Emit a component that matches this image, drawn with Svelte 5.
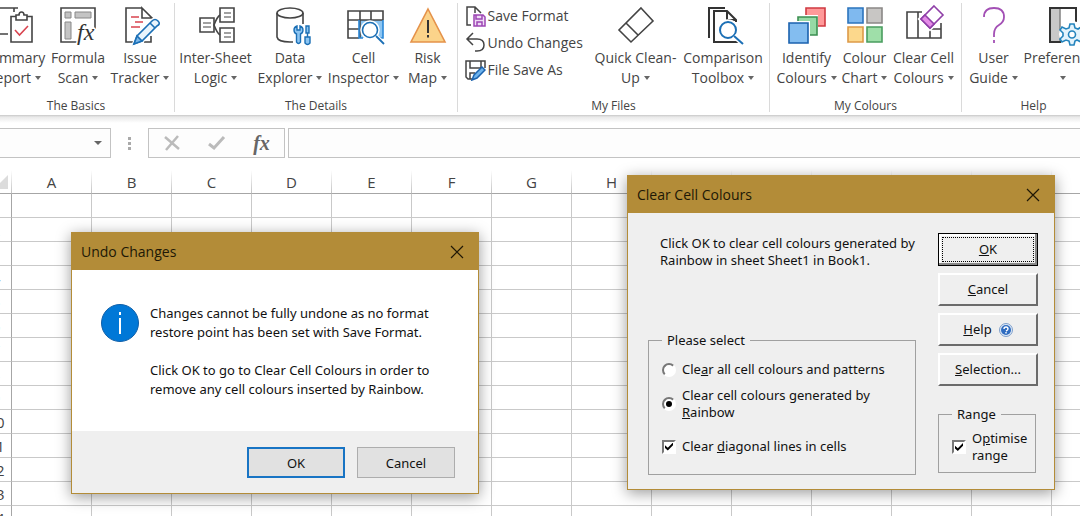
<script lang="ts">
	type Tool = { id: string; lines: [string, string] };
	type Group = { id: string; label: string; small?: { id: string; text: string }[]; tools: Tool[] };

	const groups: Group[] = [
		{
			id: 'basics',
			label: 'The Basics',
			tools: [
				{ id: 'summary', lines: ['Summary', 'Report'] },
				{ id: 'formula', lines: ['Formula', 'Scan'] },
				{ id: 'issue', lines: ['Issue', 'Tracker'] }
			]
		},
		{
			id: 'details',
			label: 'The Details',
			tools: [
				{ id: 'logic', lines: ['Inter-Sheet', 'Logic'] },
				{ id: 'data', lines: ['Data', 'Explorer'] },
				{ id: 'cell', lines: ['Cell', 'Inspector'] },
				{ id: 'risk', lines: ['Risk', 'Map'] }
			]
		},
		{
			id: 'files',
			label: 'My Files',
			small: [
				{ id: 'save', text: 'Save Format' },
				{ id: 'undo', text: 'Undo Changes' },
				{ id: 'saveas', text: 'File Save As' }
			],
			tools: [
				{ id: 'clean', lines: ['Quick Clean-', 'Up'] },
				{ id: 'compare', lines: ['Comparison', 'Toolbox'] }
			]
		},
		{
			id: 'colours',
			label: 'My Colours',
			tools: [
				{ id: 'identify', lines: ['Identify', 'Colours'] },
				{ id: 'chart', lines: ['Colour', 'Chart'] },
				{ id: 'clear', lines: ['Clear Cell', 'Colours'] }
			]
		},
		{
			id: 'help',
			label: 'Help',
			tools: [
				{ id: 'guide', lines: ['User', 'Guide'] },
				{ id: 'prefs', lines: ['Preferences', ''] }
			]
		}
	];

	const columns = 'ABCDEFGHIJKLMN'.split('');
	const rows = Array.from({ length: 14 }, (_, i) => i + 1);

	let undoOpen = $state(true);
	let clearOpen = $state(true);
	let mode = $state('rainbow');
	let diagonals = $state(true);
	let optimise = $state(true);
	let cellName = $state('');
	let formula = $state('');
</script>

{#snippet icon(id: string)}
	<svg class="icon" viewBox="0 0 40 40" fill="none" stroke="#444" stroke-width="1.6" aria-hidden="true">
		{#if id === 'summary'}
			<path d="M14 29H3V3H24M20 7V3" />
			<path d="M17 11.5H38V37H17Z" fill="#fff" />
			<path d="M22 15V10H25Q25 7 27.500 7T30 10H33V15Z" fill="#fff" />
			<path d="M21 25L25.500 30L34 21" stroke="#d9444f" />
		{:else if id === 'formula'}
			<path d="M19 37H3V3H37V24" />
			<g fill="#c4c4c4" stroke="#888" stroke-width="1">
				<path d="M7 7H13V13H7ZM17 7H33V13H17ZM7 17H13V34H7Z" />
			</g>
			<text x="19" y="35" class="fx-glyph">fx</text>
		{:else if id === 'issue'}
			<path d="M22 3H6V37H15M31 31V37H24" />
			<path d="M22 3L32 13H22Z" />
			<path d="M11 12H19M15 17H23M11 22H20" stroke="#d9444f" />
			<path d="M14 39L17 31L32 16Q35 13 38 16T37 21L22 36Z" fill="#fff" stroke="#fff" stroke-width="4" />
			<path d="M14 39L17 31L32 16Q35 13 38 16T37 21L22 36Z" fill="#e9f4fc" stroke="#1b6fb5" />
			<path d="M14 39L17 31L22 36Z" fill="#7cb8ea" stroke="#1b6fb5" />
			<path d="M30 18L35 23" stroke="#1b6fb5" />
		{:else if id === 'logic'}
			<path d="M4 13H18V27H4ZM24 3H38V17H24ZM24 23H38V37H24Z" />
			<path d="M7 18H15M7 22H15M28 8H35M28 12H35M28 28H35M28 32H35" stroke-width="1.200" />
			<path d="M24 10Q21 12 18 20Q21 28 24 30" />
		{:else if id === 'data'}
			<ellipse cx="20" cy="8" rx="13" ry="5" />
			<path d="M7 8V32Q8 37 20 37H23M33 8V19" />
			<path
				d="M27 21Q24 22 24 25T26.500 29V37Q28.500 40 30.500 37V29Q33 28 33 25T30 21V25H27Z"
				fill="#8cc5f2"
				stroke="#1b6fb5"
				stroke-width="1.400"
			/>
			<path
				d="M36 21H39V28H36ZM37.500 28V32M35 32H40V38Q37.500 41 35 38Z"
				fill="#8cc5f2"
				stroke="#1b6fb5"
				stroke-width="1.400"
			/>
		{:else if id === 'cell'}
			<path d="M15 15H39V33H15Z" fill="#8cc5f2" stroke="none" />
			<path d="M15 33H4V6H39V15M4 15H39M4 24H16M16 6V33M27 6V15" />
			<path d="M39 15V33H34M19 33H15V15" stroke="#2b88d8" />
			<circle cx="26" cy="25" r="9" fill="#fff" stroke="#fff" />
			<circle cx="26" cy="25" r="7.5" fill="#fff" stroke="#1b6fb5" />
			<path d="M32 31L40 39" stroke="#fff" stroke-width="4" />
			<path d="M32 31L40 39" stroke="#1b6fb5" stroke-width="1.800" />
		{:else if id === 'risk'}
			<path d="M20 4L37 37H3Z" fill="#fbd38a" stroke="#e5924a" />
			<path d="M20 15V28M20 30V32.500" stroke="#333" stroke-width="2" />
		{:else if id === 'clean'}
			<path d="M25 3L37 16L15 37L3 25ZM10 18L22 30" />
		{:else if id === 'compare'}
			<g stroke="#333" stroke-width="2">
				<path d="M6 33V3H22" />
				<path d="M33 17V15L24 6H11V37H35V35" />
				<path d="M24 6V15H33" />
			</g>
			<circle cx="25" cy="25" r="10" fill="#fff" stroke="#fff" />
			<circle cx="25" cy="25" r="8" stroke="#1b6fb5" stroke-width="2" />
			<path d="M31 31L40 39" stroke="#fff" stroke-width="5" />
			<path d="M31 31L40 39" stroke="#1b6fb5" stroke-width="2" />
		{:else if id === 'identify'}
			<path d="M19 3H38V21H19Z" fill="#f99" stroke="#cf3a42" />
			<path d="M9 10H31V31H9Z" fill="#fff" stroke="none" />
			<path d="M11 12H30V30H11Z" fill="#97d9a5" stroke="#3c8f52" />
			<path d="M0 16H23V39H0Z" fill="#fff" stroke="none" />
			<path d="M2 18H21V38H2Z" fill="#83bdf0" stroke="#1b62ae" />
		{:else if id === 'chart'}
			<path d="M3 3H18V18H3Z" fill="#7fb9ef" stroke="#2b74bd" />
			<path d="M22 3H37V18H22Z" fill="#c8c6c4" stroke="#8a8886" />
			<path d="M3 22H18V37H3Z" fill="#fcd88c" stroke="#dd9a48" />
			<path d="M22 22H37V37H22Z" fill="#9fdfa9" stroke="#4a9d5f" />
		{:else if id === 'clear'}
			<path d="M18 7H3V33H37V18M14 7V33M26 33V24H37" />
			<path d="M30 1L39 10L26 23L17 14Z" fill="#fff" stroke="#fff" stroke-width="5" />
			<path d="M30 1L39 10L26 23L17 14Z" fill="#fff" stroke="#8f3fa8" />
			<path d="M21 10L30 19L26 23L17 14Z" fill="#e58be8" stroke="#8f3fa8" />
		{:else if id === 'guide'}
			<path d="M10 12Q10 3 20 3T30 12Q30 17 25 20T20 29V32M20 35V38" stroke="#a350b5" stroke-width="1.800" />
		{:else if id === 'prefs'}
			<path d="M7 3H17V37H7Z" fill="#c8c8c8" stroke="none" />
			<path d="M17 3V37" stroke="#888" />
			<path d="M18 37H7V3H33V17" stroke="#333" stroke-width="2" />
			<circle cx="29" cy="29" r="13" fill="#fff" stroke="none" />
			<path
				d="M27 19H31L32 23L35 24L38 22L40 25L38 28V31L40 34L38 37L34 35L32 36L31 40H27L26 36L23 35L19 37L17 34L20 31V28L17 25L19 22L23 24L26 23Z"
				fill="#e3f3fc"
				stroke="#2484bd"
			/>
			<circle cx="29" cy="29.500" r="3.500" fill="#fff" stroke="#2484bd" />
		{/if}
	</svg>
{/snippet}

{#snippet smallIcon(id: string)}
	<svg class="small-icon" viewBox="0 0 22 22" fill="none" stroke="#444" stroke-width="1.5" aria-hidden="true">
		{#if id === 'save'}
			<path d="M7 20H3V2H11L17 8M11 2V8" />
			<path d="M10 10H19L21 12V21H10Z" fill="#efdcf5" stroke="#9d46b4" />
			<path d="M12 10V14H18V10M13 21V17H18V21" stroke="#9d46b4" />
		{:else if id === 'undo'}
			<path d="M9 1L3 7L9 13M3 7H13Q20 7 20 13T13 19H11" />
		{:else}
			<path d="M8 20H4L2 18V2H21V9M6 2V9H17V2M6 20V14H11" />
			<path d="M8 21L10 16L18 8L21 11L13 19Z" fill="#6eb3ec" stroke="#1b62ae" />
		{/if}
	</svg>
{/snippet}

{#snippet cross()}
	<svg class="cross" viewBox="0 0 14 14" stroke="#201806" stroke-width="1.2" aria-hidden="true">
		<path d="M1 1L13 13M13 1L1 13" />
	</svg>
{/snippet}

<div class="workspace">
	<div class="ribbon">
		{#each groups as group (group.id)}
			<section class="group {group.id}" aria-label={group.label}>
				<div class="tools">
					{#if group.small}
						<div class="small-tools">
							{#each group.small as item (item.id)}
								<button type="button" class="small-tool" onclick={() => item.id === 'undo' && (undoOpen = true)}>
									{@render smallIcon(item.id)}{item.text}
								</button>
							{/each}
						</div>
					{/if}
					{#each group.tools as tool (tool.id)}
						<button type="button" class="tool" onclick={() => tool.id === 'clear' && (clearOpen = true)}>
							{@render icon(tool.id)}
							<span>{tool.lines[0]}</span>
							<span class="menu">{tool.lines[1]}<i class="arrow"></i></span>
						</button>
					{/each}
				</div>
				<div class="group-label">{group.label}</div>
			</section>
		{/each}
	</div>

	<div class="formula-bar">
		<div class="name-box">
			<input type="text" aria-label="Name box" bind:value={cellName} />
			<i class="arrow"></i>
		</div>
		<div class="dots"><i></i><i></i><i></i></div>
		<div class="entry-buttons">
			<button type="button" aria-label="Cancel entry">
				<svg width="18" height="18" viewBox="0 0 18 18" stroke="#bbb" stroke-width="2.5"><path d="M2 3L16 15M15 2L3 16" /></svg>
			</button>
			<button type="button" aria-label="Enter">
				<svg width="18" height="18" viewBox="0 0 18 18" fill="none" stroke="#bbb" stroke-width="3"><path d="M1 10L6 14L16 3" /></svg>
			</button>
			<button type="button" class="fx">fx</button>
		</div>
		<input type="text" class="formula" aria-label="Formula" bind:value={formula} />
	</div>

	<table class="sheet">
		<thead>
			<tr>
				<th class="corner"><svg width="14" height="14" viewBox="0 0 14 14"><path d="M14 0V14H0Z" fill="#dcdcdc" /></svg></th>
				{#each columns as column (column)}
					<th>{column}</th>
				{/each}
			</tr>
		</thead>
		<tbody>
			{#each rows as row (row)}
				<tr>
					<th>{row}</th>
					{#each columns as column (column)}
						<td></td>
					{/each}
				</tr>
			{/each}
		</tbody>
	</table>

	{#if undoOpen}
		<div class="dialog undo-dialog" role="dialog" aria-labelledby="undo-title">
			<header>
				<h2 id="undo-title">Undo Changes</h2>
				<button type="button" aria-label="Close" onclick={() => (undoOpen = false)}>{@render cross()}</button>
			</header>
			<div class="message">
				<svg width="38" height="38" viewBox="0 0 38 38" aria-hidden="true">
					<circle cx="19" cy="19" r="18.5" fill="#0078d7" stroke="#0f5fa8" />
					<path d="M19 14V30M19 8V11" stroke="#fff" stroke-width="2" />
				</svg>
				<div>
					<p>Changes cannot be fully undone as no format<br />restore point has been set with Save Format.</p>
					<p>Click OK to go to Clear Cell Colours in order to<br />remove any cell colours inserted by Rainbow.</p>
				</div>
			</div>
			<footer>
				<button type="button" class="default" onclick={() => (undoOpen = false)}>OK</button>
				<button type="button" onclick={() => (undoOpen = false)}>Cancel</button>
			</footer>
		</div>
	{/if}

	{#if clearOpen}
		<div class="dialog clear-dialog" role="dialog" aria-labelledby="clear-title">
			<header>
				<h2 id="clear-title">Clear Cell Colours</h2>
				<button type="button" aria-label="Close" onclick={() => (clearOpen = false)}>{@render cross()}</button>
			</header>
			<div class="form">
				<div class="options">
					<p>Click OK to clear cell colours generated by<br />Rainbow in sheet Sheet1 in Book1.</p>
					<fieldset class="select-set">
						<legend>Please select</legend>
						<label>
							<input type="radio" name="mode" value="all" bind:group={mode} />
							<span>Cle<u>a</u>r all cell colours and patterns</span>
						</label>
						<label>
							<input type="radio" name="mode" value="rainbow" bind:group={mode} />
							<span>Clear cell colours generated by<br /><u>R</u>ainbow</span>
						</label>
						<label class="diagonal">
							<input type="checkbox" bind:checked={diagonals} />
							<span>Clear <u>d</u>iagonal lines in cells</span>
						</label>
					</fieldset>
				</div>
				<div class="actions">
					<button type="button" class="default" onclick={() => (clearOpen = false)}><span><u>O</u>K</span></button>
					<button type="button" onclick={() => (clearOpen = false)}><span><u>C</u>ancel</span></button>
					<button type="button">
						<span><u>H</u>elp</span>
						<svg width="14" height="14" viewBox="0 0 14 14" aria-hidden="true">
							<circle cx="7" cy="7" r="6.5" fill="#dfeaf7" stroke="#7f9fcb" />
							<circle cx="7" cy="7" r="5" fill="#2f6cc0" />
							<path d="M5 6Q5 4 7 4T9 6Q9 7 7 8M7 9V10.500" fill="none" stroke="#fff" stroke-width="1.400" />
						</svg>
					</button>
					<button type="button"><span><u>S</u>election...</span></button>
					<fieldset class="range-set">
						<legend>Range</legend>
						<label>
							<input type="checkbox" bind:checked={optimise} />
							<span>O<u>p</u>timise<br />range</span>
						</label>
					</fieldset>
				</div>
			</div>
		</div>
	{/if}
</div>

<style>
	:global(body) {
		margin: 0;
	}

	.workspace {
		position: relative;
		height: 100vh;
		overflow: hidden;
		background: #fff;
		color: #444;
		font-family: 'Open Sans', 'Noto Sans', sans-serif;
		font-size: 14px;
	}

	button,
	input {
		font: inherit;
		color: inherit;
		margin: 0;
	}

	button {
		padding: 0;
		border: none;
		background: none;
		white-space: nowrap;
	}

	/* Ribbon, scrolled a little to the right */
	.ribbon {
		display: flex;
		width: max-content;
		margin-left: -22px;
		padding-top: 3px;
	}

	.group {
		box-sizing: border-box;
		border-right: 1px solid #dadada;
		height: 109px;
		margin-bottom: 3px;
	}

	.group:last-child {
		border-right: none;
	}

	.tools {
		display: grid;
		height: 94px;
		justify-content: center;
	}

	.basics {
		width: 197px;
	}

	.basics .tools {
		grid-template-columns: 68px 60px 64px;
	}

	.details {
		width: 283px;
	}

	.details .tools {
		grid-template-columns: 76px 73px 74px 54px;
	}

	.files {
		width: 312px;
	}

	.files .tools {
		grid-template-columns: 131px 88px 87px;
	}

	.colours {
		width: 192px;
	}

	.colours .tools {
		grid-template-columns: 64px 52px 66px;
	}

	.help {
		width: 143px;
	}

	.help .tools {
		grid-template-columns: 58px 80px;
	}

	.tool {
		display: flex;
		flex-direction: column;
		align-items: center;
		line-height: 20px;
	}

	.icon {
		width: 40px;
		height: 40px;
		margin: 2px 0 3px;
		overflow: visible;
		flex: none;
	}

	.fx-glyph {
		font: italic 24px 'Liberation Serif', serif;
		fill: #333;
		stroke: #fff;
		stroke-width: 3;
		paint-order: stroke;
	}

	.menu {
		display: flex;
		align-items: center;
		gap: 4px;
		height: 20px;
	}

	.arrow {
		border: 3px solid transparent;
		border-top: 4px solid #666;
		border-bottom: none;
	}

	.small-tools {
		margin-top: -1px;
	}

	.small-tool {
		display: flex;
		align-items: center;
		height: 27px;
		gap: 2px;
		margin-left: 3px;
	}

	.small-icon {
		width: 22px;
		height: 22px;
	}

	.group-label {
		font-size: 12px;
		line-height: 18px;
		text-align: center;
	}

	/* Formula bar */
	.formula-bar {
		display: flex;
		height: 30px;
		padding: 13px 0 11px;
		background: linear-gradient(#c8c8c8, #e9e9e9 2px, #fff 8px);
	}

	.name-box,
	.entry-buttons,
	.formula {
		box-sizing: border-box;
		border: 1px solid #c3c3c3;
		background: #fdfdfd;
	}

	.name-box {
		display: flex;
		align-items: center;
		width: 111px;
		border-left: none;
		padding-right: 8px;
	}

	.name-box input {
		flex: 1;
		min-width: 0;
		border: none;
		background: none;
	}

	.name-box .arrow {
		border-width: 4px 4px 0;
	}

	.dots {
		display: flex;
		flex-direction: column;
		justify-content: center;
		align-items: center;
		gap: 2px;
		width: 37px;
	}

	.dots i {
		width: 3px;
		height: 3px;
		background: #aaa;
	}

	.entry-buttons {
		display: grid;
		grid-template-columns: repeat(3, 1fr);
		width: 137px;
		margin-right: 3px;
	}

	.entry-buttons button {
		display: flex;
		align-items: center;
		justify-content: center;
	}

	.entry-buttons .fx {
		font: italic bold 20px/20px 'Liberation Serif', serif;
		color: #666;
	}

	.formula {
		flex: 1;
		border-right: none;
	}

	/* Worksheet grid */
	.sheet {
		table-layout: fixed;
		width: 1151px;
		margin-left: -19px;
		margin-top: 1px;
		border-collapse: separate;
		border-spacing: 0;
	}

	.sheet th,
	.sheet td {
		box-sizing: border-box;
		width: 80px;
		height: 24px;
		padding: 0;
		border-right: 1px solid #c9c9c9;
		border-bottom: 1px solid #c9c9c9;
		font-size: 15px;
		line-height: 20px;
		font-weight: normal;
	}

	/* column rules fade out towards the top of the header */
	.sheet thead th {
		border-right-color: transparent;
		border-bottom-color: #a6a6a6;
		background: linear-gradient(#fff, #c0c0c0) right / 1px 100% no-repeat border-box;
	}

	.sheet th:first-child {
		width: 31px;
	}

	.sheet tbody th {
		border-right-color: #a6a6a6;
	}

	.sheet .corner {
		padding-right: 3px;
	}

	.corner svg {
		display: block;
		margin-left: auto;
	}

	/* Dialog windows */
	.dialog {
		position: absolute;
		box-sizing: border-box;
		border: 1px solid #b38c38;
		box-shadow: 0 3px 14px rgba(0, 0, 0, 0.4);
		color: #111;
		font-family: 'Noto Sans', 'Open Sans', sans-serif;
		font-size: 13px;
	}

	.dialog header {
		display: flex;
		align-items: center;
		justify-content: space-between;
		height: 37px;
		padding: 0 14px 0 9px;
		background: #b38c38;
		color: #201806;
	}

	h2 {
		margin: 0;
		font-family: 'Open Sans', 'Noto Sans', sans-serif;
		font-size: 14px;
		font-weight: normal;
	}

	.cross {
		display: block;
		width: 14px;
		height: 14px;
	}

	.undo-dialog {
		left: 71px;
		top: 232px;
		width: 408px;
		background: #fff;
	}

	.message {
		display: flex;
		gap: 11px;
		padding: 34px 29px 32px;
		line-height: 19px;
		white-space: nowrap;
	}

	.message p {
		margin: 0 0 19px;
	}

	.message p:last-child {
		margin: 0;
	}

	footer {
		display: flex;
		justify-content: flex-end;
		gap: 12px;
		padding: 16px 23px 15px;
		background: #efefef;
	}

	footer button {
		width: 98px;
		height: 31px;
		border: 1px solid #adadad;
		background: #e1e1e1;
	}

	footer .default {
		border: 2px solid #1874c4;
	}

	.clear-dialog {
		left: 627px;
		top: 175px;
		width: 428px;
		background: #efefef;
		line-height: 17px;
	}

	.form {
		display: flex;
		justify-content: space-between;
		padding: 20px 16px 14px 20px;
	}

	.options {
		display: flex;
		flex-direction: column;
		justify-content: space-between;
		width: 268px;
	}

	.options p {
		margin: 2px 0 0 12px;
		white-space: nowrap;
	}

	fieldset {
		box-sizing: border-box;
		margin: 0;
		border: 1px solid #a0a0a0;
	}

	legend {
		padding: 0 5px;
	}

	.select-set {
		height: 143px;
		padding: 12px 0 0 13px;
	}

	.clear-dialog label {
		display: flex;
		align-items: center;
		gap: 6px;
		margin-bottom: 9px;
		white-space: nowrap;
	}

	.clear-dialog .diagonal {
		margin-top: 17px;
	}

	.clear-dialog input {
		appearance: none;
		box-sizing: border-box;
		flex: none;
		display: grid;
		place-items: center;
		width: 14px;
		height: 14px;
		border: 2px solid;
		border-color: #777 #fff #fff #777;
		background: #fff;
	}

	.clear-dialog input[type='radio'] {
		border-radius: 50%;
	}

	.clear-dialog input:checked::after {
		content: '';
		width: 8px;
		height: 8px;
		background: #000;
		clip-path: polygon(0 35%, 35% 65%, 100% 0, 100% 35%, 35% 100%, 0 70%);
	}

	.clear-dialog input[type='radio']:checked::after {
		width: 6px;
		height: 6px;
		border-radius: 50%;
		clip-path: none;
	}

	.actions {
		display: flex;
		flex-direction: column;
		gap: 7px;
		width: 100px;
	}

	.actions button {
		display: flex;
		align-items: center;
		justify-content: center;
		gap: 7px;
		height: 33px;
		border: 2px solid;
		border-color: #fff #6b6b6b #6b6b6b #fff;
	}

	.actions .default {
		border: 1px solid #000;
		box-shadow: inset -2px -2px #888, inset 2px 2px #fff;
		outline: 1px dotted #000;
		outline-offset: -5px;
	}

	.range-set {
		margin: 13px 2px 2px 0;
		height: 67px;
		padding: 7px 0 0 13px;
	}

	.range-set label {
		margin: 0;
	}
</style>
